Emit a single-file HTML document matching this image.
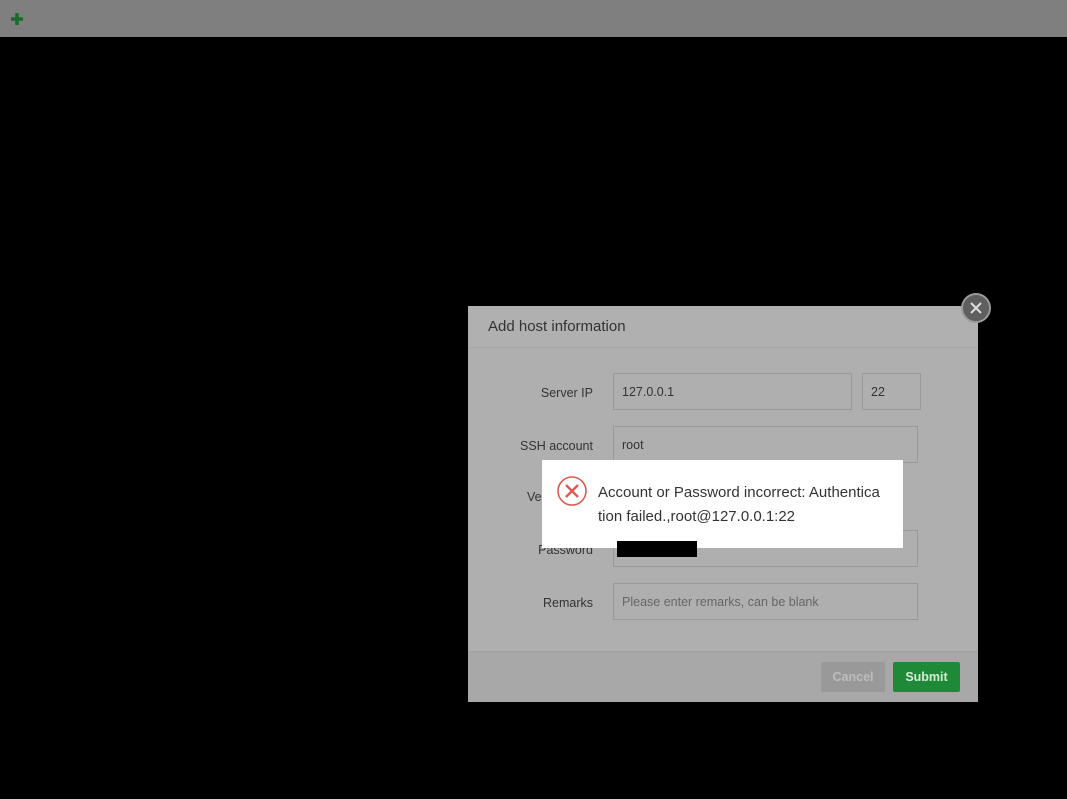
<!DOCTYPE html>
<html><head><meta charset="utf-8"><style>
*{margin:0;padding:0;box-sizing:border-box}
body{width:1067px;height:799px;background:#000;position:relative;overflow:hidden;font-family:"Liberation Sans",sans-serif}
.top{position:absolute;left:0;top:0;width:1067px;height:37px;background:#7f7f7f}
.abs{position:absolute}
.modal{left:468px;top:306px;width:510px;height:396px;background:#afafaf}
.hdr{left:0;top:0;width:510px;height:42px;border-bottom:1px solid #a6a6a6;background:#b0b0b0;font-size:15px;color:#333;padding:12px 0 0 20px}
.lbl{font-size:12.5px;color:#333;text-align:right;width:120px;left:5px}
.inp{border:1px solid #999;background:#afafaf;font-size:12.5px;color:#333;padding:0 8px;line-height:37px}
.ftr{left:0;top:345px;width:510px;height:51px;background:#a8a8a8;border-top:1px solid #a0a0a0}
.btn{font-size:12.5px;font-weight:bold;border-radius:2px;text-align:center;line-height:30px;height:30px}
</style></head><body>
<div class="top"><svg class="abs" style="left:9px;top:11px" width="16" height="16" viewBox="0 0 16 16"><path d="M8 2v12M2 8h12" stroke="#1a6a2a" stroke-width="3.5"/></svg></div>
<div class="abs modal">
 <div class="abs hdr">Add host information</div>
 <div class="abs lbl" style="top:80px">Server IP</div>
 <div class="abs inp" style="left:145px;top:67px;width:239px;height:37px">127.0.0.1</div>
 <div class="abs inp" style="left:394px;top:67px;width:59px;height:37px">22</div>
 <div class="abs lbl" style="top:133px">SSH account</div>
 <div class="abs inp" style="left:145px;top:120px;width:305px;height:37px">root</div>
 <div class="abs lbl" style="top:237px">Password</div>
 <div class="abs inp" style="left:145px;top:224px;width:305px;height:37px"></div>
 <div class="abs lbl" style="top:290px">Remarks</div>
 <div class="abs inp" style="left:145px;top:277px;width:305px;height:37px;color:#666">Please enter remarks, can be blank</div>
 <div class="abs ftr"></div>
 <div class="abs btn" style="left:353px;top:356px;width:64px;background:#999;color:#bdbdbd">Cancel</div>
 <div class="abs btn" style="left:425px;top:356px;width:67px;background:#1e8a38;color:#d8e8d8">Submit</div>
</div>
<div class="abs" style="left:527px;top:490px;font-size:12.5px;color:#333">Ve</div>
<div class="abs" style="left:961px;top:293px;width:30px;height:30px;border-radius:50%;background:#5f5f5f;border:2px solid #9a9a9a"><svg class="abs" style="left:7px;top:7px" width="12" height="12" viewBox="0 0 12 12"><path d="M1 1L11 11M11 1L1 11" stroke="#ddd" stroke-width="2"/></svg></div>
<div class="abs" style="left:542px;top:460px;width:361px;height:88px;background:#fff"></div>
<svg class="abs" style="left:556px;top:475px" width="32" height="32" viewBox="0 0 32 32"><circle cx="16" cy="16" r="14" fill="none" stroke="#e05a50" stroke-width="1.6"/><path d="M10 10L22 22M22 10L10 22" stroke="#e05a50" stroke-width="2.4"/></svg>
<div class="abs" style="left:598px;top:481px;font-size:15px;line-height:24px;color:#333;width:300px">Account or Password incorrect: Authentica<br>tion failed.,root@127.0.0.1:22</div>
<div class="abs" style="left:617px;top:541px;width:80px;height:16px;background:#000"></div>
</body></html>
